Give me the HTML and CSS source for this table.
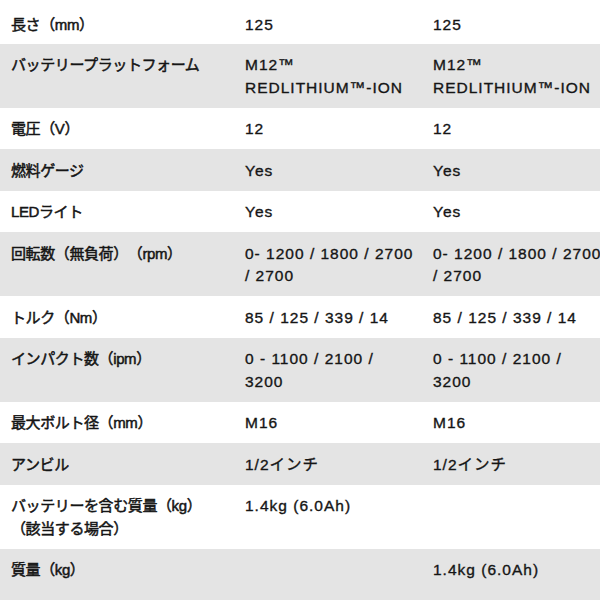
FILE: index.html
```html
<!DOCTYPE html>
<html lang="ja">
<head>
<meta charset="utf-8">
<link rel="stylesheet" href="styles.css">
</head>
<body>
<div class="wrap">
<table class="specs">
  <colgroup><col class="c1"><col class="c2"><col class="c3"></colgroup>
  <tbody>
    <tr><th>長さ（mm）</th><td>125</td><td>125</td></tr>
    <tr><th>バッテリープラットフォーム</th><td>M12™<br>REDLITHIUM™-ION</td><td>M12™<br>REDLITHIUM™-ION</td></tr>
    <tr><th>電圧（V）</th><td>12</td><td>12</td></tr>
    <tr><th>燃料ゲージ</th><td>Yes</td><td>Yes</td></tr>
    <tr><th>LEDライト</th><td>Yes</td><td>Yes</td></tr>
    <tr><th>回転数（無負荷）（rpm）</th><td>0- 1200 / 1800 / 2700 / 2700</td><td>0- 1200 / 1800 / 2700 / 2700</td></tr>
    <tr><th>トルク（Nm）</th><td>85 / 125 / 339 / 14</td><td>85 / 125 / 339 / 14</td></tr>
    <tr><th>インパクト数（ipm）</th><td>0 - 1100 / 2100 / 3200</td><td>0 - 1100 / 2100 / 3200</td></tr>
    <tr><th>最大ボルト径（mm）</th><td>M16</td><td>M16</td></tr>
    <tr><th>アンビル</th><td>1/2インチ</td><td>1/2インチ</td></tr>
    <tr><th>バッテリーを含む質量（kg）（該当する場合）</th><td>1.4kg (6.0Ah)</td><td></td></tr>
    <tr><th>質量（kg）</th><td></td><td>1.4kg (6.0Ah)</td></tr>
  </tbody>
</table>
</div>
</body>
</html>
```
FILE: styles.css
```css
html, body {
  margin: 0;
  padding: 0;
  background: #fff;
}
.wrap {
  width: 600px;
  height: 600px;
  overflow: hidden;
  padding-top: 2px;
  box-sizing: border-box;
}
.specs {
  border-collapse: collapse;
  table-layout: fixed;
  width: 611px;
  font-family: "Liberation Sans", "Noto Sans CJK JP", sans-serif;
  font-size: 15.5px;
  letter-spacing: 1px;
  line-height: 22.5px;
  color: #151515;
  -webkit-text-stroke: 0.35px #151515;
  text-spacing-trim: space-all;
}
.c1 { width: 235px; }
.c2 { width: 188px; }
.c3 { width: 188px; }
.specs th, .specs td {
  padding: 10.5px 7px 8.5px 10px;
  text-align: left;
  vertical-align: top;
  font-weight: 400;
}
.specs th {
  padding-left: 11px;
  padding-right: 10px;
  font-size: 15px;
  letter-spacing: -0.4px;
  -webkit-text-stroke: 0.5px #151515;
}
.specs tr:first-child th, .specs tr:first-child td {
  padding-top: 12px;
  padding-bottom: 7px;
}
.specs tr:last-child th, .specs tr:last-child td {
  padding-bottom: 30px;
}
.specs tr:nth-child(even) {
  background: #e4e4e4;
}
```
